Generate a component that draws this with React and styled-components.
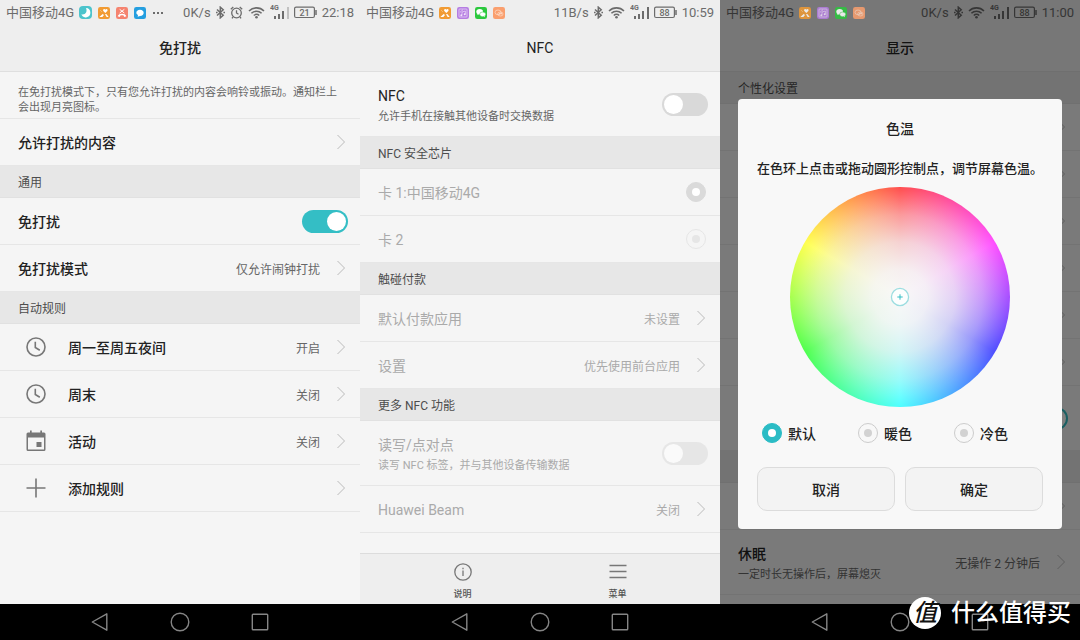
import React, { useState } from 'react';
import styled, { createGlobalStyle, css } from 'styled-components';

const GlobalStyle = createGlobalStyle`
  * {
    box-sizing: border-box;
  }

  body {
    margin: 0;
    background: #000;
    color: #222;
    font-family: Roboto, 'Noto Sans CJK SC', sans-serif;
    font-size: 14px;
  }

  button {
    margin: 0;
    border: 0;
    background: none;
    color: inherit;
    font-family: inherit;
    cursor: pointer;
  }

  svg {
    display: block;
    flex: none;
  }
`;

const Page = styled.main`
  position: relative;
  display: grid;
  grid-template-columns: repeat(3, 1fr);
  min-height: 100vh;
`;

const Phone = styled.section`
  display: flex;
  flex-direction: column;
  min-width: 0;
`;

const Screen = styled.div`
  position: relative;
  display: flex;
  flex: 1;
  flex-direction: column;
  background: #f5f5f5;
`;

const Header = styled.header`
  border-bottom: 1px solid #dfdfdf;
  background: #eee;
`;

const StatusBar = styled.div`
  display: flex;
  align-items: center;
  justify-content: space-between;
  height: 25px;
  padding: 0 6px;
  color: #6c6c6c;
  font-size: 13px;
  line-height: 25px;
  white-space: nowrap;
`;

const StatusGroup = styled.div`
  display: flex;
  align-items: center;
  gap: 5px;
`;

const AppIcons = styled.div`
  position: relative;
  z-index: 2;
  display: flex;
  align-items: center;
  gap: 6px;
  opacity: ${({ $dimmed }) => ($dimmed ? 0.85 : 1)};
`;

const Title = styled.h1`
  margin: 0;
  font-size: 14px;
  font-weight: ${({ $light }) => ($light ? 400 : 500)};
  line-height: 46px;
  text-align: center;
`;

const Note = styled.p`
  height: 47px;
  margin: 0;
  padding: 13px 18px 0;
  border-bottom: 1px solid #e6e6e6;
  color: #666;
  font-size: 11px;
  line-height: 15px;
`;

const SectionTitle = styled.h2`
  height: 32px;
  margin: 0;
  padding: 0 18px;
  border-bottom: 1px solid #e1e1e1;
  background: #e7e7e7;
  color: #4d4d4d;
  font-size: 12px;
  font-weight: 400;
  line-height: 34px;
`;

const StyledRow = styled.div`
  display: flex;
  align-items: center;
  width: 100%;
  min-height: ${({ $tall }) => ($tall ? 65 : 47)}px;
  padding: 0 12px 0 18px;
  border-bottom: 1px solid #e6e6e6;
  text-align: left;

  ${({ $disabled }) =>
    $disabled &&
    css`
      color: #aaa;
    `}
`;

const RowIcon = styled.span`
  display: flex;
  justify-content: center;
  width: 36px;
  margin-right: 14px;
  color: #777;
`;

const RowText = styled.span`
  flex: 1;
  min-width: 0;
  padding-top: ${({ $tall }) => ($tall ? 4 : 2)}px;
`;

const RowTitle = styled.span`
  display: block;
  font-size: 14px;
  font-weight: ${({ $light }) => ($light ? 400 : 500)};
  line-height: 21px;
`;

const RowSummary = styled.span`
  display: block;
  color: ${({ $disabled }) => ($disabled ? '#aaa' : '#666')};
  font-size: 11px;
  line-height: 19px;
`;

const RowValue = styled.span`
  margin-right: 14px;
  color: ${({ $disabled }) => ($disabled ? '#aaa' : '#666')};
  font-size: 12px;
`;

const Switch = styled.input.attrs({ type: 'checkbox' })`
  display: flex;
  flex: none;
  width: 46px;
  height: 23px;
  margin: 0;
  padding: 2px;
  appearance: none;
  border-radius: 12px;
  background: #d9d9d9;

  &::before {
    width: 19px;
    height: 19px;
    border-radius: 50%;
    background: #fff;
    content: '';
  }

  &:checked {
    justify-content: flex-end;
    background: #34bec5;
  }

  &:disabled {
    opacity: 0.5;
  }
`;

const Radio = styled.input.attrs({ type: 'radio' })`
  display: grid;
  flex: none;
  place-items: center;
  width: 20px;
  height: 20px;
  margin: 0 2px;
  appearance: none;
  border: 1px solid #ccc;
  border-radius: 50%;

  &::before {
    width: 8px;
    height: 8px;
    border-radius: 50%;
    background: #d2d2d2;
    content: '';
  }

  &:checked {
    border-color: #2bbcc5;
    background: #2bbcc5;
  }

  &:checked::before {
    background: #fff;
  }

  &:disabled {
    border-color: #e6e6e6;
  }

  &:disabled::before {
    background: #e6e6e6;
  }

  &:disabled:checked {
    border-color: #dadada;
    background: #dadada;
  }

  &:disabled:checked::before {
    background: #fff;
  }
`;

const BottomBar = styled.div`
  display: flex;
  height: 51px;
  margin-top: auto;
  padding: 0 25px;
  border-top: 1px solid #dcdcdc;
  background: #eee;
`;

const BottomAction = styled.button`
  display: flex;
  flex: 1;
  flex-direction: column;
  align-items: center;
  gap: 7px;
  padding: 9px 0 0;
  color: #555;
  font-size: 9px;
  font-weight: 500;
  line-height: 12px;
`;

const NavBar = styled.nav`
  display: flex;
  justify-content: center;
  height: 36px;
  background: #000;
`;

const NavButton = styled.button`
  display: flex;
  align-items: center;
  justify-content: center;
  width: 80px;
  padding: 0;
  color: #858585;
`;

const Overlay = styled.div`
  position: absolute;
  inset: 0;
  z-index: 1;
  display: flex;
  align-items: center;
  padding: 24px 18px 0;
  background: rgba(0, 0, 0, 0.5);
`;

const Dialog = styled.div`
  display: flex;
  flex: 1;
  flex-direction: column;
  align-items: center;
  min-width: 0;
  padding: 10px 19px 18px;
  border-radius: 4px;
  background: #f8f8f8;
`;

const DialogTitle = styled.h2`
  margin: 0 0 10px;
  font-size: 14px;
  font-weight: 500;
  line-height: 40px;
`;

const DialogText = styled.p`
  margin: 0 0 8px;
  font-size: 13px;
  font-weight: 500;
  line-height: 20px;
  white-space: nowrap;
`;

const Wheel = styled.div`
  display: grid;
  place-items: center;
  width: 220px;
  height: 220px;
  border-radius: 50%;
  background:
    radial-gradient(
      closest-side,
      rgba(248, 248, 248, 1) 0%,
      rgba(246, 246, 246, 0.97) 25%,
      rgba(244, 244, 244, 0.86) 50%,
      rgba(248, 248, 248, 0.62) 75%,
      rgba(255, 255, 255, 0.42) 90%,
      rgba(255, 255, 255, 0.3) 100%
    ),
    conic-gradient(#f00, #f0f, #00f, #0ff, #0f0, #ff0, #f00);
`;

const Options = styled.div`
  display: grid;
  grid-template-columns: 96px 96px 1fr;
  align-self: stretch;
  margin: 14px 0 22px 3px;
`;

const Option = styled.label`
  display: flex;
  align-items: center;
  gap: 4px;
  height: 24px;
  font-size: 14px;
  font-weight: 500;
  white-space: nowrap;
`;

const DialogActions = styled.div`
  display: flex;
  gap: 10px;
  align-self: stretch;
`;

const DialogButton = styled.button`
  flex: 1;
  height: 44px;
  padding: 0;
  border: 1px solid #dcdcdc;
  border-radius: 10px;
  background: #f3f3f3;
  font-size: 14px;
  font-weight: 500;
`;

const Watermark = styled.div`
  position: absolute;
  right: 9px;
  bottom: 11px;
  z-index: 3;
  display: flex;
  align-items: center;
  gap: 10px;
  color: #fff;
  font-size: 24px;
  font-weight: 500;
  line-height: 32px;
`;

const WatermarkLogo = styled.span`
  width: 32px;
  height: 32px;
  border-radius: 50%;
  background: #fff;
  color: #111;
  font-style: italic;
  text-align: center;
`;

/* Icons */

const MoonIcon = () => (
  <svg width="13" height="13" viewBox="0 0 39 39">
    <rect width="39" height="39" rx="12" fill="#4cc4cc" />
    <path d="M21 6a14 14 0 1 1-14 19c12 3 19-8 14-19z" fill="#fff" />
  </svg>
);

const GalleryIcon = () => (
  <svg width="12" height="12" viewBox="0 0 36 36">
    <rect width="36" height="36" rx="7" fill="#f19b33" />
    <path d="M22 18l-6-6c-3-4 3-8 6-4 3-4 9 0 6 4z" fill="#fff" />
    <path d="M4 30l10-9 4 3-5 6zM21 22l4-1 7 9h-6z" fill="#fff" />
    <path d="M6 9l6 6" stroke="#f8c98a" strokeWidth="2" />
  </svg>
);

const MissedCallIcon = () => (
  <svg width="12" height="12" viewBox="0 0 36 36">
    <rect width="36" height="36" rx="7" fill="#f5836f" />
    <path d="M11 7l14 11M25 7L11 18" stroke="#fff" strokeWidth="3" />
    <path d="M5 28c3-10 23-10 26 0l-6 2-3-5h-8l-3 5z" fill="#fff" />
  </svg>
);

const ChatIcon = () => (
  <svg width="12" height="12" viewBox="0 0 36 36">
    <rect width="36" height="36" rx="7" fill="#259fe0" />
    <path d="M18 8c7 0 11 4 11 9s-4 10-11 10l-7 2 1-5c-3-2-5-4-5-7 0-5 4-9 11-9z" fill="#fff" />
  </svg>
);

const MusicIcon = () => (
  <svg width="12" height="12" viewBox="0 0 36 36">
    <rect width="36" height="36" rx="7" fill="#b57de2" />
    <g fill="none" stroke="#f3e6fc" strokeWidth="2">
      <rect x="6" y="6" width="24" height="24" rx="2" />
      <path d="M15 25V15l10-3v10M9 16l9-8" />
    </g>
    <circle cx="13" cy="25" r="3" fill="#f3e6fc" />
    <circle cx="23" cy="22" r="3" fill="#f3e6fc" />
  </svg>
);

const WechatIcon = () => (
  <svg width="12" height="12" viewBox="0 0 36 36">
    <rect width="36" height="36" rx="7" fill="#2bc83d" />
    <ellipse cx="14" cy="14" rx="10" ry="8" fill="#fff" />
    <path d="M8 19l-1 5 6-3z" fill="#fff" />
    <ellipse cx="23" cy="22" rx="9" ry="7" fill="#fff" stroke="#2bc83d" strokeWidth="1.5" />
    <path d="M26 27l3 4v-6z" fill="#fff" />
  </svg>
);

const CloneIcon = () => (
  <svg width="12" height="12" viewBox="0 0 36 36">
    <rect width="36" height="36" rx="7" fill="#fa9f6e" />
    <g fill="none" stroke="#fde0cd" strokeWidth="2">
      <ellipse cx="15" cy="16" rx="9" ry="7" />
      <ellipse cx="22" cy="21" rx="8" ry="6" />
    </g>
    <circle cx="20" cy="20" r="2" fill="#fde0cd" />
    <circle cx="25" cy="20" r="2" fill="#fde0cd" />
  </svg>
);

const MoreIcon = () => (
  <svg width="12" height="12" viewBox="0 0 12 12" fill="#6c6c6c">
    <rect x="1" y="5" width="2" height="2" />
    <rect x="5" y="5" width="2" height="2" />
    <rect x="9" y="5" width="2" height="2" />
  </svg>
);

const BluetoothIcon = () => (
  <svg width="9" height="13" viewBox="0 0 9 13" fill="none" stroke="currentColor" strokeWidth="1.5">
    <path d="M1 3.5l6.2 5.7-2.9 2.6V1.2l2.9 2.6L1 9.5" />
    <path d="M0 6.5h1.6M7.4 6.5H9" />
  </svg>
);

const AlarmIcon = () => (
  <svg width="13" height="13" viewBox="0 0 13 13" fill="none" stroke="currentColor" strokeWidth="1.3">
    <circle cx="6.5" cy="7" r="4.8" />
    <path d="M6.5 4.3V7l2 1.2M.8 3.2L3.3 1M12.2 3.2L9.7 1M3 11l-1 1.4M10 11l1 1.4" />
  </svg>
);

const WifiIcon = () => (
  <svg width="17" height="13" viewBox="0 0 17 13" fill="none" stroke="currentColor" strokeWidth="1.6">
    <path d="M1 5a10.6 10.6 0 0 1 15 0M3.4 7.3a7.3 7.3 0 0 1 10.2 0M5.8 9.5a3.9 3.9 0 0 1 5.4 0" />
    <circle cx="8.5" cy="11.3" r="1.3" fill="currentColor" stroke="none" />
  </svg>
);

const SignalIcon = ({ weak }) => (
  <svg width="19" height="17" viewBox="0 0 19 17" fill="currentColor">
    <text x="0" y="6" fontSize="7" fontWeight="700">
      4G
    </text>
    <rect x="4" y="12" width="2" height="3" />
    <rect x="8" y="10" width="2" height="5" />
    <rect x="12" y="7" width="2" height="8" />
    <rect x="17" y="3" width="2" height="12" opacity={weak ? 0.35 : 1} />
  </svg>
);

const BatteryIcon = ({ level }) => (
  <svg width="23" height="13" viewBox="0 0 23 13" fill="none" stroke="currentColor">
    <rect x="0.6" y="1.1" width="19.8" height="10.4" rx="1.5" strokeWidth="1.2" />
    <path d="M22 4v5" strokeWidth="1.5" />
    <text
      x="10.5"
      y="9.5"
      fontSize="9"
      fontWeight="500"
      textAnchor="middle"
      fill="currentColor"
      stroke="none"
    >
      {level}
    </text>
  </svg>
);

const Chevron = () => (
  <svg width="14" height="16" viewBox="0 0 14 16" fill="none" stroke="#bbb">
    <path d="M3.5 1l7 7-7 7" />
  </svg>
);

const ClockIcon = () => (
  <svg width="20" height="20" viewBox="0 0 20 20" fill="none" stroke="currentColor" strokeWidth="1.6">
    <circle cx="10" cy="10" r="9" />
    <path d="M9.3 4.8v5.7l4.5 2.7" />
  </svg>
);

const CalendarIcon = () => (
  <svg width="20" height="22" viewBox="0 0 20 22" fill="currentColor">
    <path
      fillRule="evenodd"
      d="M2 2.5h2V.5h1.7v2h8.6v-2H16v2h2A1.5 1.5 0 0 1 19.5 4v15.5A1.5 1.5 0 0 1 18 21H2a1.5 1.5 0 0 1-1.5-1.5V4A1.5 1.5 0 0 1 2 2.5zM2 7.5v12h16v-12z"
    />
    <rect x="10.5" y="12" width="5" height="5" />
  </svg>
);

const PlusIcon = () => (
  <svg width="20" height="20" viewBox="0 0 20 20" stroke="currentColor" strokeWidth="1.6">
    <path d="M10 .5v19M.5 10h19" />
  </svg>
);

const InfoIcon = () => (
  <svg width="18" height="18" viewBox="0 0 18 18" fill="none" stroke="#777" strokeWidth="1.3">
    <circle cx="9" cy="9" r="8.2" />
    <path d="M9 7.5V13M9 4.8v1.4" />
  </svg>
);

const MenuIcon = () => (
  <svg width="18" height="18" viewBox="0 0 18 18" stroke="#777" strokeWidth="1.5">
    <path d="M.5 2.5h17M.5 8.5h17M.5 14.5h17" />
  </svg>
);

const BackIcon = () => (
  <svg width="18" height="20" viewBox="0 0 18 20" fill="none" stroke="currentColor" strokeWidth="1.4">
    <path d="M15.8 1.8v16.4L1.3 10z" strokeLinejoin="round" />
  </svg>
);

const HomeIcon = () => (
  <svg width="20" height="20" viewBox="0 0 20 20" fill="none" stroke="currentColor" strokeWidth="1.4">
    <circle cx="10" cy="10" r="8.8" />
  </svg>
);

const RecentIcon = () => (
  <svg width="18" height="18" viewBox="0 0 18 18" fill="none" stroke="currentColor" strokeWidth="1.4">
    <rect x="1.3" y="1.3" width="15.4" height="15.4" rx="0.8" />
  </svg>
);

const HandleIcon = () => (
  <svg width="20" height="20" viewBox="0 0 20 20" fill="none">
    <circle cx="10" cy="10" r="8.6" fill="#fcfefe" stroke="#9bdde0" strokeWidth="1.3" />
    <path d="M10 7.3v5.4M7.3 10h5.4" stroke="#34bec5" />
  </svg>
);

/* Shared parts */

const PhoneHeader = ({ title, light, icons, speed, alarm, battery, time, dimmed }) => (
  <Header>
    <StatusBar>
      <StatusGroup>
        <span>中国移动4G</span>
        <AppIcons $dimmed={dimmed}>{icons}</AppIcons>
      </StatusGroup>
      <StatusGroup>
        <span>{speed}</span>
        <BluetoothIcon />
        {alarm && <AlarmIcon />}
        <WifiIcon />
        <SignalIcon weak={alarm} />
        <BatteryIcon level={battery} />
        <span>{time}</span>
      </StatusGroup>
    </StatusBar>
    <Title $light={light}>{title}</Title>
  </Header>
);

const Row = ({ icon, title, summary, value, control, disabled, light, tall }) => (
  <StyledRow
    as={control ? 'label' : 'button'}
    disabled={control ? undefined : disabled}
    $disabled={disabled}
    $tall={tall || Boolean(summary)}
  >
    {icon && <RowIcon>{icon}</RowIcon>}
    <RowText $tall={Boolean(summary)}>
      <RowTitle $light={light || disabled}>{title}</RowTitle>
      {summary && <RowSummary $disabled={disabled}>{summary}</RowSummary>}
    </RowText>
    {value && <RowValue $disabled={disabled}>{value}</RowValue>}
    {control || <Chevron />}
  </StyledRow>
);

const SystemNav = () => (
  <NavBar>
    <NavButton aria-label="返回">
      <BackIcon />
    </NavButton>
    <NavButton aria-label="主屏幕">
      <HomeIcon />
    </NavButton>
    <NavButton aria-label="最近任务">
      <RecentIcon />
    </NavButton>
  </NavBar>
);

/* Screens */

const DoNotDisturb = () => (
  <Phone>
    <Screen>
      <PhoneHeader
        title="免打扰"
        icons={
          <>
            <MoonIcon />
            <GalleryIcon />
            <MissedCallIcon />
            <ChatIcon />
            <MoreIcon />
          </>
        }
        speed="0K/s"
        alarm
        battery="21"
        time="22:18"
      />
      <Note>在免打扰模式下，只有您允许打扰的内容会响铃或振动。通知栏上会出现月亮图标。</Note>
      <Row title="允许打扰的内容" />
      <SectionTitle>通用</SectionTitle>
      <Row title="免打扰" control={<Switch defaultChecked />} />
      <Row title="免打扰模式" value="仅允许闹钟打扰" />
      <SectionTitle>自动规则</SectionTitle>
      <Row icon={<ClockIcon />} title="周一至周五夜间" value="开启" />
      <Row icon={<ClockIcon />} title="周末" value="关闭" />
      <Row icon={<CalendarIcon />} title="活动" value="关闭" />
      <Row icon={<PlusIcon />} title="添加规则" />
    </Screen>
    <SystemNav />
  </Phone>
);

const Nfc = () => (
  <Phone>
    <Screen>
      <PhoneHeader
        title="NFC"
        light
        icons={
          <>
            <GalleryIcon />
            <MusicIcon />
            <WechatIcon />
            <CloneIcon />
          </>
        }
        speed="11B/s"
        battery="88"
        time="10:59"
      />
      <Row title="NFC" light summary="允许手机在接触其他设备时交换数据" control={<Switch />} />
      <SectionTitle>NFC 安全芯片</SectionTitle>
      <Row title="卡 1:中国移动4G" disabled control={<Radio name="chip" defaultChecked disabled />} />
      <Row title="卡 2" disabled control={<Radio name="chip" disabled />} />
      <SectionTitle>触碰付款</SectionTitle>
      <Row title="默认付款应用" value="未设置" disabled />
      <Row title="设置" value="优先使用前台应用" disabled />
      <SectionTitle>更多 NFC 功能</SectionTitle>
      <Row
        title="读写/点对点"
        summary="读写 NFC 标签，并与其他设备传输数据"
        disabled
        control={<Switch disabled />}
      />
      <Row title="Huawei Beam" value="关闭" disabled />
      <BottomBar>
        <BottomAction>
          <InfoIcon />
          说明
        </BottomAction>
        <BottomAction>
          <MenuIcon />
          菜单
        </BottomAction>
      </BottomBar>
    </Screen>
    <SystemNav />
  </Phone>
);

const tones = ['默认', '暖色', '冷色'];

const Display = () => {
  const [tone, setTone] = useState(tones[0]);

  return (
    <Phone>
      <Screen>
        <PhoneHeader
          title="显示"
          icons={
            <>
              <GalleryIcon />
              <MusicIcon />
              <WechatIcon />
              <CloneIcon />
            </>
          }
          speed="0K/s"
          battery="88"
          time="11:00"
          dimmed
        />
        <SectionTitle>个性化设置</SectionTitle>
        <Row />
        <Row />
        <Row />
        <Row />
        <Row />
        <Row />
        <Row tall control={<Switch defaultChecked />} />
        <SectionTitle />
        <Row />
        <Row title="休眠" summary="一定时长无操作后，屏幕熄灭" value="无操作 2 分钟后" />
        <Overlay>
          <Dialog role="dialog" aria-labelledby="tone-title">
            <DialogTitle id="tone-title">色温</DialogTitle>
            <DialogText>在色环上点击或拖动圆形控制点，调节屏幕色温。</DialogText>
            <Wheel>
              <HandleIcon />
            </Wheel>
            <Options>
              {tones.map(name => (
                <Option key={name}>
                  <Radio name="tone" checked={tone === name} onChange={() => setTone(name)} />
                  {name}
                </Option>
              ))}
            </Options>
            <DialogActions>
              <DialogButton>取消</DialogButton>
              <DialogButton>确定</DialogButton>
            </DialogActions>
          </Dialog>
        </Overlay>
      </Screen>
      <SystemNav />
    </Phone>
  );
};

const App = () => (
  <>
    <GlobalStyle />
    <Page>
      <DoNotDisturb />
      <Nfc />
      <Display />
      <Watermark>
        <WatermarkLogo>值</WatermarkLogo>
        什么值得买
      </Watermark>
    </Page>
  </>
);

export default App;
